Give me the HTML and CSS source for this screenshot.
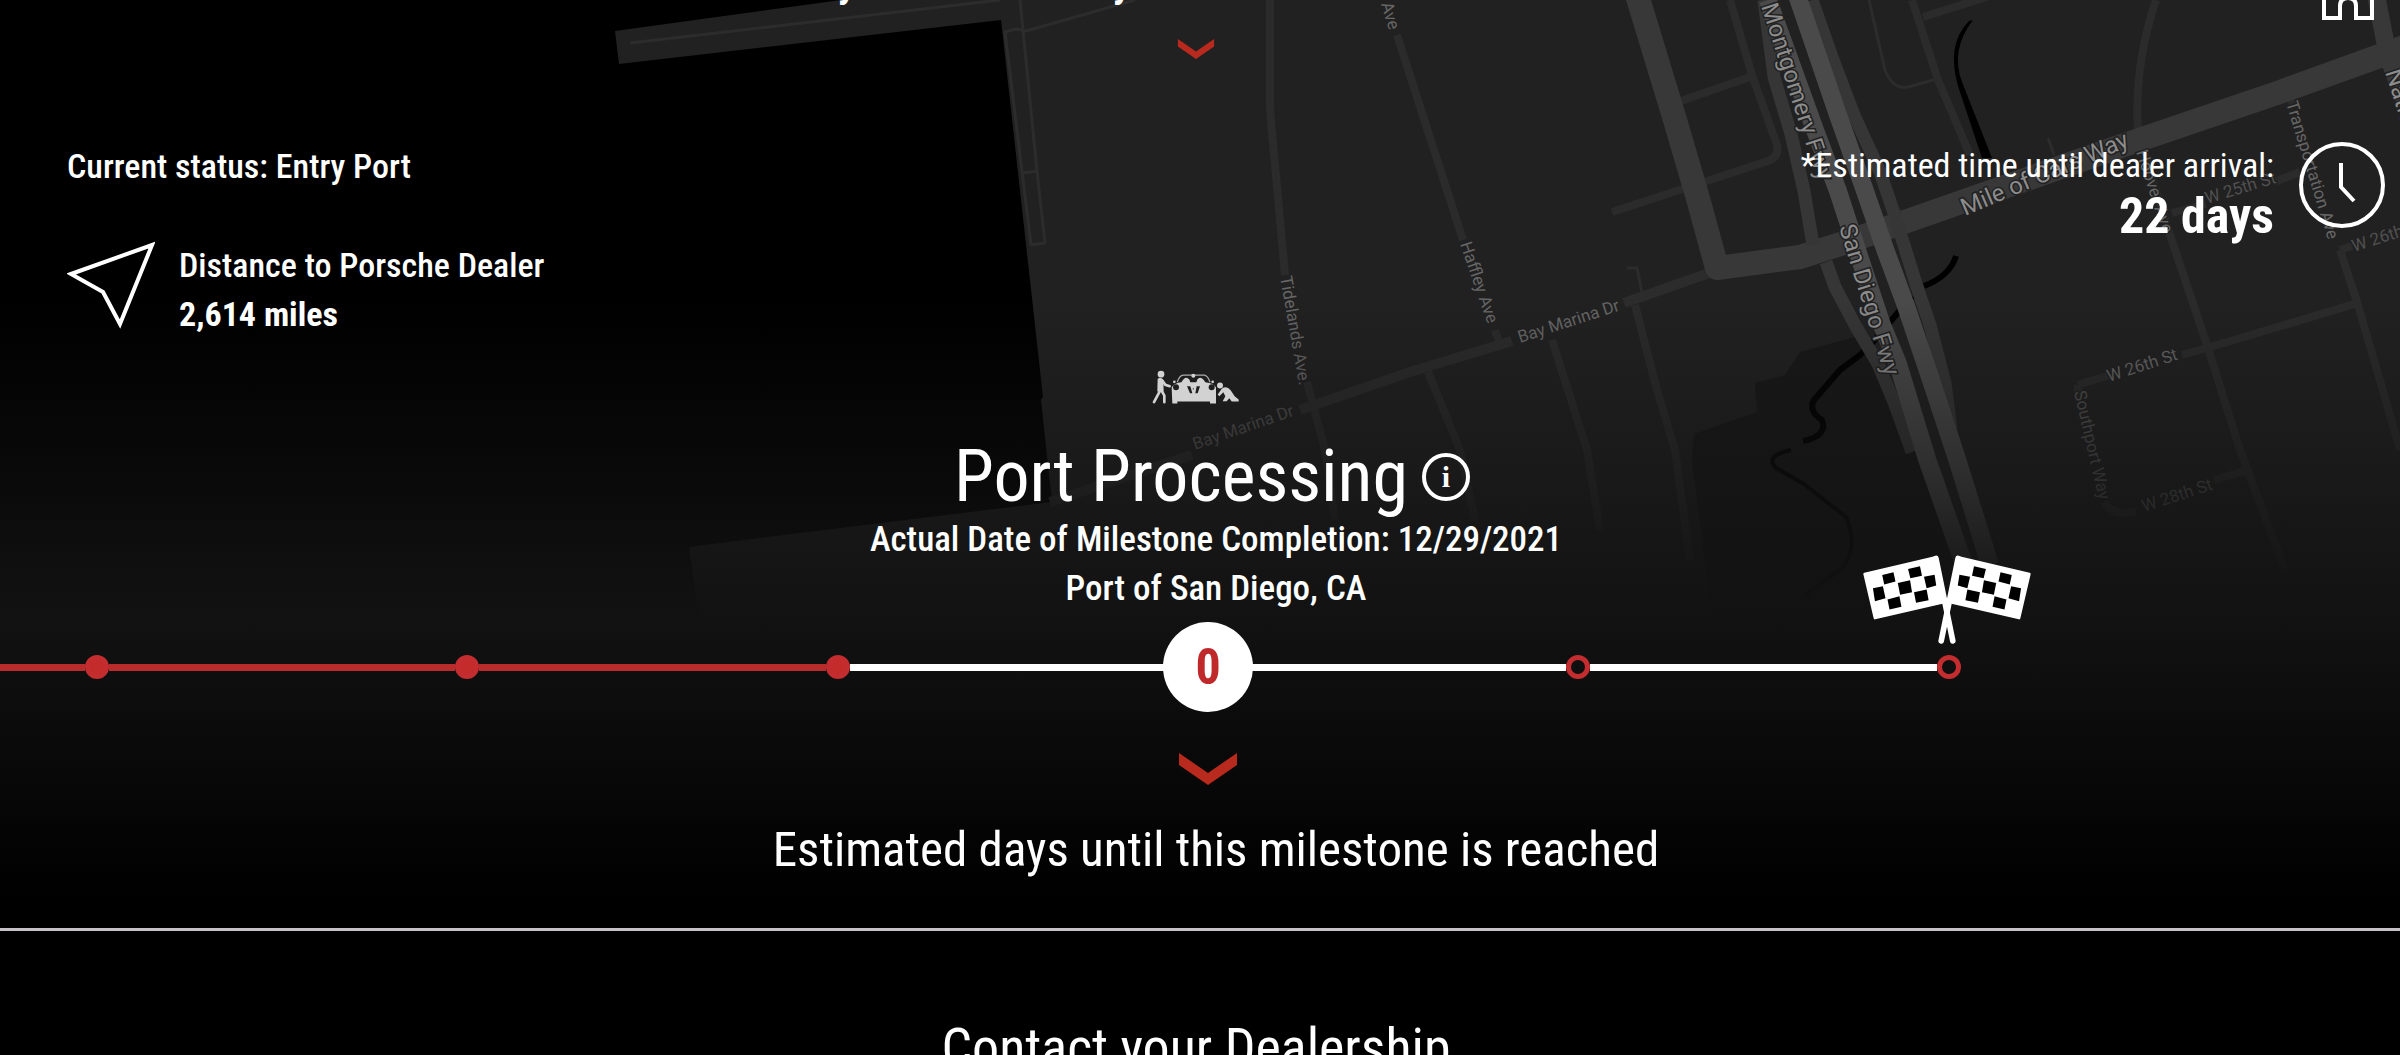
FILE: index.html
```html
<!DOCTYPE html>
<html lang="en">
<head>
  <meta charset="UTF-8" />
  <meta name="viewport" content="width=device-width, initial-scale=1.0" />
  <title>Porsche Delivery Tracker</title>
  <link rel="stylesheet" href="styles.css">
</head>
<body>

  <main class="tracker">

    <!-- Map backdrop -->
    <svg class="map" viewBox="0 0 2400 928" preserveAspectRatio="xMidYMin slice" aria-hidden="true">
      <path class="land" d="M615 31L885 -6H2410V640H702L689 547L800 533L1052 502L1041 400L1043 397L1001 20L619 64Z" />
      <path class="marsh" d="M1862 335L1800 352L1785 375L1755 383L1757 412L1694 434L1692 460L1715 640H1990L1930 450Z" />

      <!-- Creeks -->
      <path class="water" d="M1973 20Q1950 50 1962 82L1992 158L1982 158L1958 86Q1946 44 1969 21Z" />
      <path class="creek wide" d="M1956 256Q1950 276 1924 286M1912 296L1890 322L1873 342L1860 355L1840 370L1814 400Q1808 411 1822 420Q1828 436 1803 441" />
      <path class="creek" d="M1791 450Q1764 456 1776 468L1804 484L1846 517Q1860 550 1840 570L1805 595" />

      <!-- Side streets -->
      <path class="lane" d="M630 43L1000 0M1020 0L1037 171L1045 243L1031 245L1005 32L1016 29L1026 31L1135 0M1023 173L1037 171M1627 268H1637L1643 298M1869 0L1885 70Q1893 90 1908 87L1937 79M2048 138L2054 155" />
      <path class="street" d="M1270 0V110L1285 275M1307 382L1325 450L1335 520M1397 35L1463 240M1495 330L1499 342M1428 372L1460 450L1475 520M1552 340L1587 450L1600 530M1635 305L1657 390L1675 450L1690 560" />
      <path class="street" d="M1730 0L1752 75L1777 145Q1780 158 1765 162L1612 212M1750 77L1678 102M1912 0L1938 80L1970 155M1923 17L1987 -3" />
      <path class="street" d="M2156 0Q2134 65 2138 130M2140 140L2170 235L2207 345L2240 450L2285 570M2290 95L2294 108M2340 250L2358 305L2400 450" />
      <path class="street" d="M2078 385L2110 375M2182 355L2207 348L2358 303M2172 213L2206 204M2274 182L2300 172M2340 250L2352 246M2078 385V396M2104 502Q2112 516 2136 512M2214 480L2248 470" />
      <path class="drive" d="M1050 502L1192 455M1300 410L1410 372L1512 341M1624 303L1712 272" />

      <!-- Main roads -->
      <path class="road" d="M1637 -5L1675 120L1697 195L1717 268L1800 257L1850 241L2130 143L2280 92L2410 45" />
      <path class="road narrow" d="M1697 190L1714 262M2376 -5L2388 56L2412 120" />
      <path class="ramp" d="M1764 0L1774 77L1791 134L1804 191L1813 245M1812 0L1832 57L1854 115L1880 172L1893 210L1904 245L1917 287L1930 325L1945 383L1951 429M1826 262L1835 287L1855 325L1878 364L1894 402L1912 452" />
      <path class="freeway" d="M1797 -5L1838 115L1865 191L1885 249L1906 306L1932 383L1957 459L1990 565M1768 0L1815 130L1838 191L1863 268L1882 325L1898 364L1927 459L1966 570" />

      <g class="label">
        <text transform="translate(1381 4) rotate(73)">Ave</text>
        <text transform="translate(1460 244) rotate(71)">Haffley Ave</text>
        <text transform="translate(1280 277) rotate(80)">Tidelands Ave.</text>
        <text transform="translate(1520 343) rotate(-18)">Bay Marina Dr</text>
        <text class="dim" transform="translate(1195 450) rotate(-19)">Bay Marina Dr</text>
        <text transform="translate(2136 152) rotate(72)">Hoover Ave</text>
        <text class="dim" transform="translate(2207 204) rotate(-17)">W 25th St</text>
        <text transform="translate(2286 103) rotate(73)">Transportation Ave</text>
        <text class="dim" transform="translate(2354 252) rotate(-18)">W 26th St</text>
        <text transform="translate(2109 382) rotate(-18)">W 26th St</text>
        <text class="dim" transform="translate(2074 392) rotate(77)">Southport Way</text>
        <text class="dim" transform="translate(2144 512) rotate(-18)">W 28th St</text>
      </g>
      <g class="label major">
        <text transform="translate(1761 6) rotate(72)">Montgomery Fwy</text>
        <text transform="translate(1839 227) rotate(73)">San Diego Fwy</text>
        <text transform="translate(1965 216) rotate(-23)">Mile of Cars Way</text>
        <text transform="translate(2385 72) rotate(72)">National City Blvd</text>
      </g>
    </svg>

    <div class="tracker-top">
      <section class="status">
        <p>Current status: Entry Port</p>
        <div class="distance">
          <svg class="distance-icon" viewBox="0 0 88 88" aria-hidden="true">
            <path d="M4 33L85 4L53 83L36 51Z" />
          </svg>
          <p>Distance to Porsche Dealer<br><strong>2,614 miles</strong></p>
        </div>
      </section>

      <section class="previous">
        <h2>Every mile of the way to the dealer is tracked here</h2>
        <svg class="chevron small" viewBox="0 0 58 32" aria-hidden="true">
          <path d="M0 0L29 20L58 0V12L29 32L0 12Z" />
        </svg>
      </section>

      <section class="arrival">
        <svg class="home-icon" viewBox="0 0 56 56" aria-hidden="true">
          <path d="M4 26L28 4L52 26V53H36V41Q36 33 28 33Q20 33 20 41V53H4Z" />
        </svg>
        <div class="arrival-row">
          <p>*Estimated time until dealer arrival:<br><strong>22 days</strong></p>
          <svg class="clock-icon" viewBox="0 0 88 88" aria-hidden="true">
            <circle cx="44" cy="44" r="41" />
            <path d="M43 22V46L56 60" />
          </svg>
        </div>
      </section>
    </div>

    <section class="milestone">
      <svg class="car-icon" viewBox="95 55 270 110" aria-hidden="true">
        <!-- Worker pushing -->
        <circle cx="125" cy="70" r="10" />
        <path class="limb" d="M124 86L122 120L104 154M126 118L135 134V154M128 88L138 102L151 106" />
        <path d="M115 84Q125 78 132 88L133 122H114Z" />
        <!-- Car -->
        <path class="frame" d="M174 94Q180 74 192 73H256Q266 76 272 94" />
        <path d="M157 110Q164 96 186 94L192 86Q200 76 210 86L213 94H231L234 86Q242 76 252 86L258 94Q284 97 290 110V158H272V152H174V158H159Z" />
        <circle cx="222" cy="75" r="6" />
        <circle cx="165" cy="93" r="4" />
        <circle cx="280" cy="93" r="4" />
        <g class="cutout">
          <circle cx="170" cy="109" r="9" />
          <circle cx="277" cy="109" r="9" />
          <path d="M203 106H213L219 127H212ZM232 106H242L235 127H228Z" />
          <circle cx="222" cy="114" r="2" />
        </g>
        <!-- Worker crouching -->
        <circle cx="302" cy="104" r="9" />
        <path d="M308 113Q322 104 334 118L346 136L358 146V152H337L330 142L322 151H310L318 136L312 124L300 136L295 131Z" />
      </svg>

      <div class="milestone-title">
        <h1>Port Processing</h1>
        <button class="info" type="button" aria-label="About this milestone">i</button>
      </div>
      <p class="milestone-text">Actual Date of Milestone Completion: 12/29/2021</p>
      <p class="milestone-text">Port of San Diego, CA</p>
    </section>

    <!-- Progress line -->
    <ol class="timeline">
      <li class="step done"><span class="dot"></span></li>
      <li class="step done"><span class="dot"></span></li>
      <li class="step done"><span class="dot"></span></li>
      <li class="step current"><span class="dot"><b>0</b></span></li>
      <li class="step"><span class="dot"></span></li>
      <li class="step">
        <span class="dot"></span>
        <svg class="flags" viewBox="70 48 507 268" aria-hidden="true">
          <defs>
            <g id="flag">
              <path class="cloth" d="M75 105L287 55L309 191L106 238Z" />
              <path class="pole" d="M290 58L341 307" />
              <path class="check" d="M128 108L162 100L168 128L134 137ZM206 90L242 82L248 110L213 118ZM100 148L130 142L138 178L106 187ZM175 132L212 124L218 160L182 168ZM254 113L286 107L291 140L262 148ZM144 182L180 172L186 204L150 212ZM224 160L262 152L268 184L230 192Z" />
            </g>
          </defs>
          <use href="#flag" />
          <use href="#flag" transform="translate(647 0) scale(-1 1)" />
        </svg>
      </li>
    </ol>

    <section class="estimate">
      <svg class="chevron" viewBox="0 0 58 32" aria-hidden="true">
        <path d="M0 0L29 20L58 0V12L29 32L0 12Z" />
      </svg>
      <p>Estimated days until this milestone is reached</p>
    </section>
  </main>

  <footer class="contact">
    <h2>Contact your Dealership</h2>
  </footer>

</body>
</html>
```

FILE: styles.css
```css
* {
  box-sizing: border-box;
}
body {
  margin: 0;
  background: #000;
  color: #fff;
  font-family: "Roboto Condensed", "Liberation Sans Narrow", Roboto, sans-serif;
  font-size: 34px;
  font-weight: 500;
  line-height: 49px;
}
h1, h2, p, ol {
  margin: 0;
  padding: 0;
}
h1, h2 {
  font-weight: 400;
}
svg {
  display: block;
}

/* Tracker panel */
.tracker {
  position: relative;
  display: flex;
  flex-direction: column;
  overflow: hidden;
  padding-bottom: 49px;
  border-bottom: 3px solid #c4c2c6;
}
/* Fades the map out behind the timeline */
.tracker::before {
  content: "";
  position: absolute;
  inset: 0;
  background: linear-gradient(
    rgba(18, 18, 18, 0) 300px,
    rgba(18, 18, 18, 0.5) 470px,
    rgba(18, 18, 18, 0.85) 570px,
    #121212 620px,
    #000 900px
  );
  z-index: 1;
}
.tracker > * {
  position: relative;
  z-index: 2;
}
.tracker > .map {
  position: absolute;
  top: 0;
  left: 0;
  width: 100%;
  height: 100%;
  z-index: 0;
}

/* Map */
.land { fill: #212121; }
.marsh { fill: #181818; }
.water { fill: #000; }
.creek,
.lane,
.street,
.drive,
.road,
.ramp,
.freeway {
  fill: none;
  stroke-linejoin: round;
}
.creek { stroke: #050505; stroke-width: 4; }
.creek.wide { stroke: #000; stroke-width: 6; }
.lane { stroke: #2c2c2c; stroke-width: 3; }
.street { stroke: #2b2b2b; stroke-width: 8; }
.drive { stroke: #2c2c2c; stroke-width: 10; }
.road { stroke: #383838; stroke-width: 24; }
.road.narrow { stroke-width: 18; }
.ramp { stroke: #363636; stroke-width: 13; }
.freeway { stroke: #4a4a4a; stroke-width: 18; }
.label {
  fill: #666;
  font-family: Roboto, sans-serif;
  font-size: 17px;
  font-weight: 400;
  stroke: #212121;
  stroke-width: 3px;
  paint-order: stroke;
}
.label .dim { fill: #505050; }
.label.major {
  fill: #8c8c8c;
  font-size: 24px;
}

/* Top row */
.tracker-top {
  display: grid;
  grid-template-columns: 1fr auto 1fr;
  margin-top: -47px;
}
.status {
  padding: 189px 0 0 67px;
}
.distance {
  display: flex;
  align-items: flex-start;
  gap: 24px;
  margin-top: 50px;
}
.distance-icon {
  width: 88px;
  height: 88px;
}
.distance-icon path,
.home-icon path,
.clock-icon circle,
.clock-icon path {
  fill: none;
  stroke: #fff;
  stroke-width: 4;
}
.previous {
  display: flex;
  flex-direction: column;
  align-items: center;
  gap: 30px;
  padding-right: 8px;
}
.previous h2 {
  font-size: 44px;
  font-weight: 500;
  line-height: 56px;
}
.arrival {
  display: flex;
  flex-direction: column;
  align-items: flex-end;
  gap: 120px;
  padding: 12px 14px 0 0;
}
.home-icon {
  width: 56px;
  height: 56px;
  margin-right: 10px;
}
.arrival-row {
  display: flex;
  align-items: flex-start;
  gap: 24px;
  font-weight: 400;
  text-align: right;
}
.arrival strong {
  font-size: 50px;
  line-height: 52px;
}
.clock-icon {
  width: 88px;
  height: 88px;
}

/* Chevrons */
.chevron {
  width: 58px;
  height: 32px;
  fill: #b82a1e;
}
.chevron.small {
  width: 38px;
  height: 20px;
}

/* Current milestone */
.milestone {
  display: flex;
  flex-direction: column;
  align-items: center;
  margin-top: 30px;
}
.car-icon {
  width: 90px;
  height: 37px;
  margin-right: 8px;
  fill: #d2d2d2;
}
.car-icon .limb {
  fill: none;
  stroke: #d2d2d2;
  stroke-width: 8;
  stroke-linecap: round;
}
.car-icon .frame {
  fill: none;
  stroke: #aaa;
  stroke-width: 4;
}
.car-icon .cutout { fill: #1f1f1f; }
.milestone-title {
  display: flex;
  align-items: center;
  gap: 14px;
  margin-top: 33px;
  padding-left: 24px;
}
.milestone-title h1 {
  font-size: 72px;
  line-height: 76px;
}
.info {
  width: 48px;
  height: 48px;
  padding: 0;
  border: 4px solid #fff;
  border-radius: 50%;
  background: none;
  color: #fff;
  font: bold 30px/36px "Liberation Serif", serif;
}
.milestone-text {
  padding-left: 32px;
  font-size: 35px;
}

/* Timeline */
.timeline {
  display: flex;
  margin-top: 9px;
  padding-right: 18.3%;
  list-style: none;
}
.step {
  position: relative;
  display: flex;
  flex: 1;
  align-items: center;
  height: 90px;
}
.step:first-child {
  flex: 0 0 109px;
}
.step::before {
  content: "";
  flex: 1;
  height: 7px;
  background: #fff;
}
.dot {
  display: flex;
  flex: 0 0 24px;
  align-items: center;
  justify-content: center;
  min-width: 0;
  height: 24px;
  border: 5px solid #c42d2f;
  border-radius: 50%;
}
.done::before { background: #b82c2b; }
.done .dot { background: #c42b2b; }
.current .dot {
  border: 0;
  background: #fff;
}
.current b {
  flex: none;
  width: 90px;
  height: 90px;
  border-radius: 50%;
  background: #fff;
  color: #c0292c;
  font-size: 50px;
  line-height: 90px;
  text-align: center;
}
.current { z-index: 1; }
.flags {
  position: absolute;
  right: -70px;
  bottom: 68px;
  width: 168px;
  height: 89px;
}
.flags .cloth,
.flags .pole {
  fill: #fff;
  stroke: #fff;
  stroke-width: 8;
  stroke-linejoin: round;
  stroke-linecap: round;
}
.flags .pole { stroke-width: 17; }
.flags .check { fill: #000; }

/* Estimate */
.estimate {
  display: flex;
  flex-direction: column;
  align-items: center;
  gap: 36px;
  margin-top: 41px;
  font-size: 49px;
  font-weight: 400;
  line-height: 58px;
}
.estimate .chevron { margin-left: 16px; }
.estimate p { padding-left: 32px; }

/* Contact */
.contact {
  padding: 85px 8px 0 0;
  text-align: center;
}
.contact h2 {
  font-size: 54px;
  line-height: 64px;
}
```
